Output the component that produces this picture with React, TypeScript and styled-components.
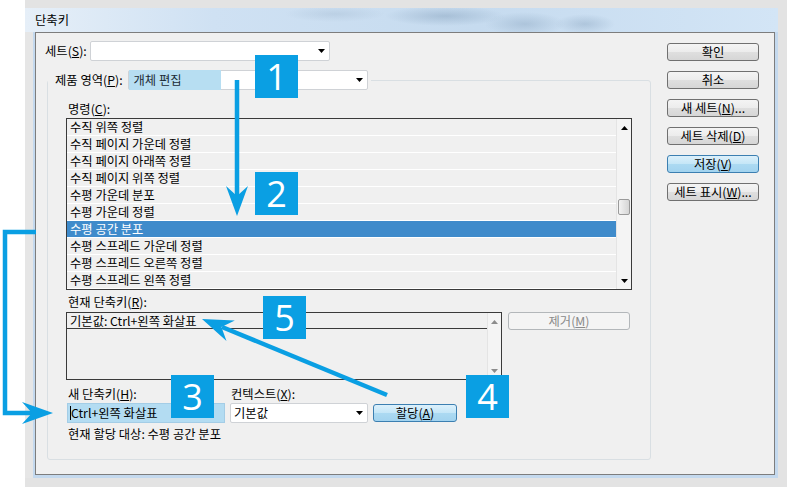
import styled, { createGlobalStyle } from 'styled-components';

const GlobalStyle = createGlobalStyle`
  html, body {
    margin: 0;
    padding: 0;
    background: #fff;
  }
  body {
    font-family: "Noto Sans CJK KR", "Noto Sans", sans-serif;
    font-size: 12.3px;
    color: #000;
  }
  * {
    box-sizing: border-box;
  }
`;

const CALLOUT_BLUE = '#0a9fe3';

const commands = [
  '수직 위쪽 정렬',
  '수직 페이지 가운데 정렬',
  '수직 페이지 아래쪽 정렬',
  '수직 페이지 위쪽 정렬',
  '수평 가운데 분포',
  '수평 가운데 정렬',
  '수평 공간 분포',
  '수평 스프레드 가운데 정렬',
  '수평 스프레드 오른쪽 정렬',
  '수평 스프레드 왼쪽 정렬',
];

const Screen = styled.div`
  position: relative;
  width: 787px;
  height: 487px;
  display: flex;
  overflow: hidden;
`;

const Gutter = styled.div`
  width: 25px;
  background: #fff;
`;

const Desktop = styled.div`
  flex: 1;
  background: #e3e3e3;
  padding-top: 8px;
`;

const Window = styled.div`
  width: 753px;
  height: 470px;
  display: flex;
  flex-direction: column;
`;

const TitleBar = styled.div`
  height: 24px;
  display: flex;
  align-items: center;
  padding-left: 10px;
  background:
    radial-gradient(ellipse 60px 10px at 420px 8px, rgba(110, 140, 170, 0.35), transparent),
    radial-gradient(ellipse 40px 12px at 500px 16px, rgba(110, 140, 170, 0.3), transparent),
    radial-gradient(ellipse 30px 10px at 560px 16px, rgba(110, 140, 170, 0.3), transparent),
    radial-gradient(ellipse 50px 8px at 310px 6px, rgba(140, 165, 190, 0.25), transparent),
    linear-gradient(to right, #e6eff8, #cfe1f3 25%, #c6dbef 60%, #d3e5f6);
`;

const Frame = styled.div`
  flex: 1;
  display: flex;
  padding: 0 3px 3px 10px;
  background: linear-gradient(to right, #e6e6e6 0 8px, #c4d9ee 8px);
`;

const Client = styled.div`
  flex: 1;
  display: flex;
  gap: 16px;
  padding: 8px 15px 14px 9px;
  background: #f0f0f0;
  border: 1px solid #7d7d7d;
`;

const LeftColumn = styled.div`
  width: 606px;
  display: flex;
  flex-direction: column;
`;

const SetRow = styled.div`
  display: grid;
  grid-template-columns: 45px 240px;
  align-items: center;
  height: 20px;
`;

const Combo = styled.div<{ $width?: number }>`
  height: 20px;
  width: ${({ $width }) => ($width ? `${$width}px` : 'auto')};
  display: flex;
  align-items: center;
  background: #fff;
  border: 1px solid #cfd2d6;
  border-radius: 2px;
  padding: 0 4px 0 3px;
`;

const ComboText = styled.span`
  flex: 1;
  line-height: 18px;
  white-space: nowrap;
`;

const ComboHighlight = styled.span`
  width: 92px;
  align-self: stretch;
  margin: -1px 0 -1px -3px;
  padding-left: 5px;
  line-height: 20px;
  background: #b7def2;
  color: #1b2a36;
`;

const Spacer = styled.span`
  flex: 1;
`;

const GroupBox = styled.fieldset`
  flex: 1;
  margin: 9px 0 0 2px;
  padding: 0;
  min-width: 0;
  border: 1px solid #d9dfe3;
  border-radius: 3px;
`;

const Legend = styled.legend`
  display: flex;
  align-items: center;
  padding: 0 3px 0 7px;
  height: 20px;
`;

const LegendLabel = styled.span`
  margin-right: 5px;
  white-space: nowrap;
`;

const GroupContent = styled.div`
  padding: 12px 18px 0 18px;
  display: flex;
  flex-direction: column;
`;

const FieldLabel = styled.div<{ $gap?: number }>`
  line-height: 14px;
  height: 14px;
  padding-left: 2px;
  margin-top: ${({ $gap }) => $gap ?? 0}px;
  white-space: nowrap;
`;

const ListBox = styled.div<{ $height: number; $gap?: number }>`
  height: ${({ $height }) => $height}px;
  margin-top: ${({ $gap }) => $gap ?? 0}px;
  display: flex;
  background: #f0f0f0;
  border: 1px solid #3a3a3a;
`;

const Rows = styled.div`
  flex: 1;
  display: flex;
  flex-direction: column;
`;

const Row = styled.div<{ $selected?: boolean; $strong?: boolean }>`
  height: ${({ $strong }) => ($strong ? 16 : 17)}px;
  line-height: 16px;
  padding-left: 3px;
  white-space: nowrap;
  border-bottom: 1px solid ${({ $strong }) => ($strong ? '#3a3a3a' : '#ffffff')};
  background: ${({ $selected }) => ($selected ? '#3f8bcb' : 'transparent')};
  color: ${({ $selected }) => ($selected ? '#fff' : '#000')};
`;

const ScrollBar = styled.div<{ $width: number }>`
  width: ${({ $width }) => $width}px;
  display: flex;
  flex-direction: column;
  align-items: center;
  background: #f4f4f4;
  border-left: 1px solid #e4e4e4;
`;

const ScrollArrow = styled.div`
  height: 17px;
  width: 100%;
  display: flex;
  align-items: center;
  justify-content: center;
`;

const Thumb = styled.div<{ $offset: number }>`
  margin-top: ${({ $offset }) => $offset}px;
  width: 12px;
  height: 16px;
  border: 1px solid #9a9a9a;
  border-radius: 2px;
  background: linear-gradient(to right, #f3f3f3, #e2e2e2 55%, #d6d6d6);
`;

const CurrentRow = styled.div`
  display: grid;
  grid-template-columns: 436px 122px;
  column-gap: 6px;
  align-items: start;
  margin-top: 3px;
`;

const Button = styled.button<{ $tone?: 'default' | 'blue' | 'disabled' }>`
  height: 18px;
  padding: 0;
  font-family: inherit;
  font-size: 12.3px;
  line-height: 16px;
  text-align: center;
  border-radius: 3px;
  border: 1px solid
    ${({ $tone }) =>
      $tone === 'blue' ? '#3c7fb1' : $tone === 'disabled' ? '#b3b7ba' : '#707070'};
  color: ${({ $tone }) => ($tone === 'disabled' ? '#8a8a8a' : '#000')};
  background: ${({ $tone }) => {
    switch ($tone) {
      case 'blue':
        return 'linear-gradient(#dcf0fb, #c4e6f7 50%, #acdaf2 50%, #a2d3ef)';
      case 'disabled':
        return '#f4f4f4';
      default:
        return 'linear-gradient(#f4f4f4, #ececec 50%, #dfdfdf 50%, #d6d6d6)';
    }
  }};
`;

const NewShortcutGrid = styled.div`
  display: grid;
  grid-template-columns: 158px 138px 84px;
  column-gap: 5px;
  row-gap: 2px;
  align-items: center;
  margin-top: 7px;
  padding-left: 1px;
`;

const GridLabel = styled.div`
  line-height: 14px;
  height: 14px;
  padding-left: 1px;
  white-space: nowrap;
`;

const ShortcutInput = styled.div`
  height: 20px;
  display: flex;
  align-items: center;
  background: #b3dcf2;
  border: 1px solid #a4cde6;
  padding-left: 2px;
  white-space: nowrap;
  line-height: 18px;

  &::before {
    content: '';
    width: 1px;
    height: 14px;
    background: #000;
  }
`;

const ButtonColumn = styled.div`
  width: 92px;
  display: flex;
  flex-direction: column;
  gap: 10px;
  padding-top: 2px;
`;

const Callout = styled.div<{ $left: number; $top: number }>`
  position: absolute;
  left: ${({ $left }) => $left}px;
  top: ${({ $top }) => $top}px;
  width: 43px;
  height: 43px;
  display: flex;
  align-items: center;
  justify-content: center;
  background: ${CALLOUT_BLUE};
  color: #fff;
  font-family: "Open Sans", "Noto Sans", sans-serif;
  font-size: 36px;
  line-height: 1;
`;

const Overlay = styled.svg`
  position: absolute;
  left: 0;
  top: 0;
  pointer-events: none;
`;

const Triangle = ({ up, color = '#000' }: { up?: boolean; color?: string }) => (
  <svg width="7" height="4" viewBox="0 0 7 4">
    <polygon points={up ? '0,4 7,4 3.5,0' : '0,0 7,0 3.5,4'} fill={color} />
  </svg>
);

const arrowHead = (tx: number, ty: number, fx: number, fy: number, len = 30, half = 11, notch = 10) => {
  const dx = tx - fx;
  const dy = ty - fy;
  const l = Math.hypot(dx, dy);
  const ux = dx / l;
  const uy = dy / l;
  const bx = tx - ux * len;
  const by = ty - uy * len;
  const nx = -uy;
  const ny = ux;
  const pts = [
    [tx, ty],
    [bx + nx * half, by + ny * half],
    [tx - ux * (len - notch), ty - uy * (len - notch)],
    [bx - nx * half, by - ny * half],
  ];
  return pts.map((p) => p.join(',')).join(' ');
};

const Arrows = () => (
  <Overlay width="787" height="487" viewBox="0 0 787 487">
    <g stroke={CALLOUT_BLUE} strokeWidth="4.5" fill="none">
      <line x1="237" y1="80" x2="237" y2="200" />
      <polyline points="36,232 5,232 5,413 36,413" />
      <line x1="387" y1="395" x2="222" y2="327" />
    </g>
    <g fill={CALLOUT_BLUE}>
      <polygon points={arrowHead(237, 216, 237, 80, 30, 11)} />
      <polygon points={arrowHead(53, 413, 5, 413, 31, 11)} />
      <polygon points={arrowHead(202, 319, 387, 395, 31, 11)} />
    </g>
  </Overlay>
);

export default function App() {
  return (
    <>
      <GlobalStyle />
      <Screen>
        <Gutter />
        <Desktop>
          <Window>
            <TitleBar>단축키</TitleBar>
            <Frame>
              <Client>
                <LeftColumn>
                  <SetRow>
                    <span>
                      세트(<u>S</u>):
                    </span>
                    <Combo>
                      <Spacer />
                      <Triangle />
                    </Combo>
                  </SetRow>

                  <GroupBox>
                    <Legend>
                      <LegendLabel>
                        제품 영역(<u>P</u>):
                      </LegendLabel>
                      <Combo $width={240}>
                        <ComboHighlight>개체 편집</ComboHighlight>
                        <Spacer />
                        <Triangle />
                      </Combo>
                    </Legend>

                    <GroupContent>
                      <FieldLabel>
                        명령(<u>C</u>):
                      </FieldLabel>
                      <ListBox $height={172} $gap={2}>
                        <Rows>
                          {commands.map((label) => (
                            <Row key={label} $selected={label === '수평 공간 분포'}>
                              {label}
                            </Row>
                          ))}
                        </Rows>
                        <ScrollBar $width={15}>
                          <ScrollArrow>
                            <Triangle up />
                          </ScrollArrow>
                          <Thumb $offset={63} />
                          <Spacer />
                          <ScrollArrow>
                            <Triangle />
                          </ScrollArrow>
                        </ScrollBar>
                      </ListBox>

                      <FieldLabel $gap={5}>
                        현재 단축키(<u>R</u>):
                      </FieldLabel>
                      <CurrentRow>
                        <ListBox $height={68}>
                          <Rows>
                            <Row $strong>기본값: Ctrl+왼쪽 화살표</Row>
                          </Rows>
                          <ScrollBar $width={14}>
                            <ScrollArrow>
                              <Triangle up color="#8c8c8c" />
                            </ScrollArrow>
                            <Spacer />
                            <ScrollArrow>
                              <Triangle color="#8c8c8c" />
                            </ScrollArrow>
                          </ScrollBar>
                        </ListBox>
                        <Button $tone="disabled" disabled>
                          제거(<u>M</u>)
                        </Button>
                      </CurrentRow>

                      <NewShortcutGrid>
                        <GridLabel>
                          새 단축키(<u>H</u>):
                        </GridLabel>
                        <GridLabel>
                          컨텍스트(<u>X</u>):
                        </GridLabel>
                        <span />
                        <ShortcutInput>Ctrl+왼쪽 화살표</ShortcutInput>
                        <Combo>
                          <ComboText>기본값</ComboText>
                          <Triangle />
                        </Combo>
                        <Button $tone="blue">
                          할당(<u>A</u>)
                        </Button>
                      </NewShortcutGrid>

                      <FieldLabel $gap={4}>현재 할당 대상: 수평 공간 분포</FieldLabel>
                    </GroupContent>
                  </GroupBox>
                </LeftColumn>

                <ButtonColumn>
                  <Button>확인</Button>
                  <Button>취소</Button>
                  <Button>
                    새 세트(<u>N</u>)...
                  </Button>
                  <Button>
                    세트 삭제(<u>D</u>)
                  </Button>
                  <Button $tone="blue">
                    저장(<u>V</u>)
                  </Button>
                  <Button>
                    세트 표시(<u>W</u>)...
                  </Button>
                </ButtonColumn>
              </Client>
            </Frame>
          </Window>
        </Desktop>

        <Arrows />
        <Callout $left={255} $top={55}>1</Callout>
        <Callout $left={255} $top={172}>2</Callout>
        <Callout $left={171} $top={375}>3</Callout>
        <Callout $left={466} $top={375}>4</Callout>
        <Callout $left={263} $top={296}>5</Callout>
      </Screen>
    </>
  );
}
